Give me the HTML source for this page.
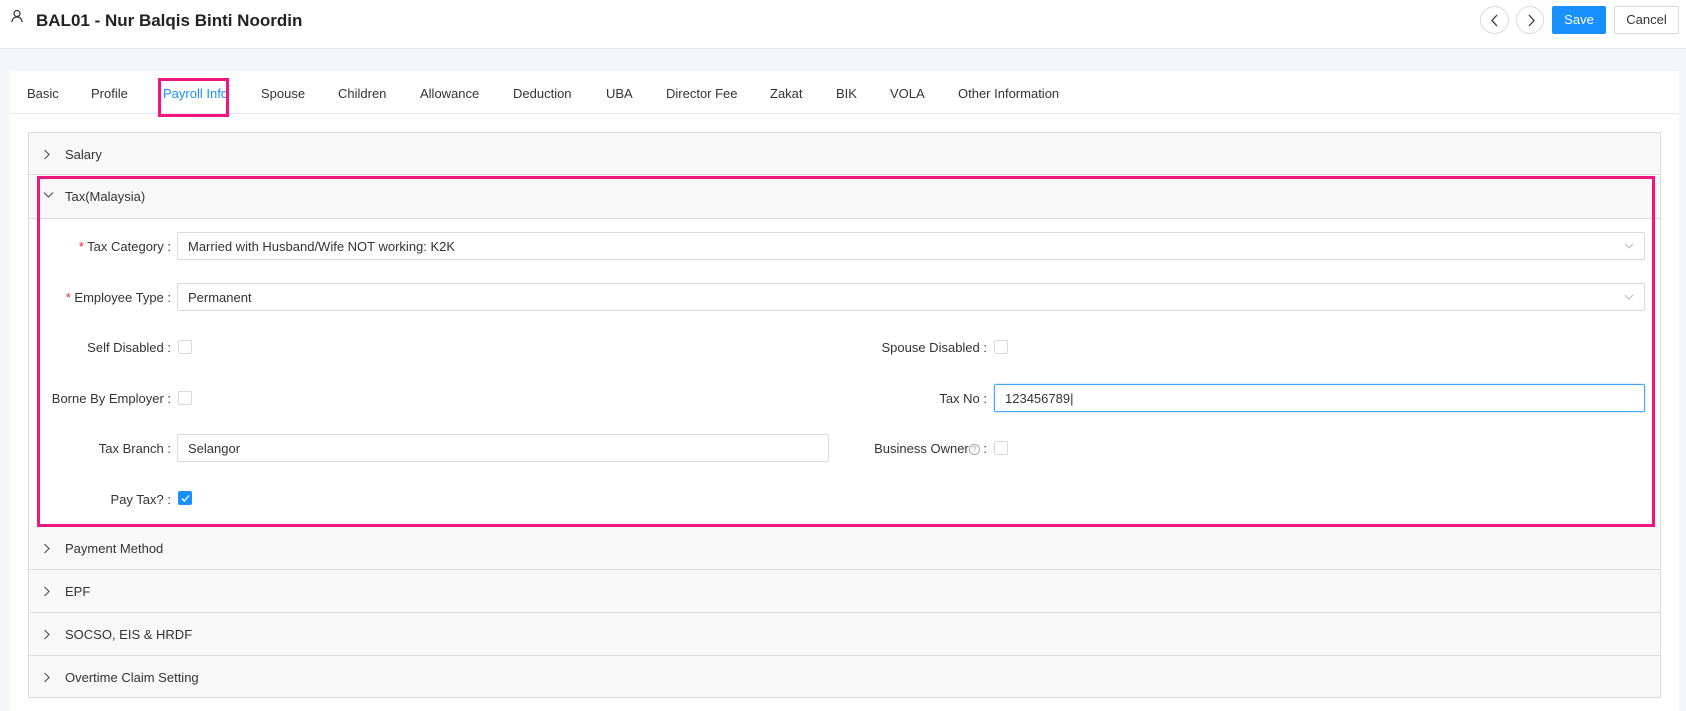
<!DOCTYPE html>
<html><head><meta charset="utf-8"><style>
*{box-sizing:border-box;margin:0;padding:0}
body{width:1686px;height:707px;overflow:hidden;background:#f4f5f8;font-family:"Liberation Sans",sans-serif;font-size:13px;color:#333;position:relative}
.a{position:absolute}
.hdr{left:0;top:0;width:1686px;height:49px;background:#fff;border-bottom:1px solid #e4e6ea}
.card{left:10px;top:71px;width:1669px;height:640px;background:#fff}
.tab{top:86px;font-size:13px;color:#333}
.ph{left:28px;width:1633px;height:43px;background:#f8f8f9;border:1px solid #dcdcdc;border-top:none}
.ph span{position:absolute;left:36px;top:14px}
.ph svg{position:absolute;left:14px;top:16px}
.lbl{text-align:right;width:200px}
.inp{border:1px solid #d9d9d9;background:#fff;border-radius:2px;height:28px;padding:6px 10px}
.cb{width:14px;height:14px;border:1px solid #d9d9d9;background:#fff;border-radius:2px}
.req{color:#f5222d}
</style></head><body>
<div class="a hdr"></div>
<svg class="a" style="left:10px;top:9px" width="14" height="14" viewBox="0 0 14 14"><circle cx="7" cy="4.5" r="3" fill="none" stroke="#333" stroke-width="1.2"/><path d="M2 13c0-3 2-5 5-5s5 2 5 5" fill="none" stroke="#333" stroke-width="1.2"/></svg>
<div class="a" style="left:36px;top:11px;font-size:17px;font-weight:bold;color:#222">BAL01 - Nur Balqis Binti Noordin</div>
<div class="a" style="left:1480px;top:6px;width:29px;height:28px;border:1px solid #d9d9d9;border-radius:50%"><svg class="a" style="left:8px;top:7px" width="12" height="13" viewBox="0 0 12 13"><path d="M8 1L3 6.5 8 12" fill="none" stroke="#333" stroke-width="1.3"/></svg></div>
<div class="a" style="left:1516px;top:6px;width:28px;height:28px;border:1px solid #d9d9d9;border-radius:50%"><svg class="a" style="left:8px;top:7px" width="12" height="13" viewBox="0 0 12 13"><path d="M4 1l5 5.5L4 12" fill="none" stroke="#333" stroke-width="1.3"/></svg></div>
<div class="a" style="left:1552px;top:6px;width:54px;height:28px;background:#1890ff;color:#fff;border-radius:2px;text-align:center;line-height:28px">Save</div>
<div class="a" style="left:1614px;top:6px;width:65px;height:28px;border:1px solid #d9d9d9;border-radius:2px;text-align:center;line-height:26px">Cancel</div>
<div class="a card"></div>
<div class="a" style="left:10px;top:113px;width:1669px;height:1px;background:#e8e8e8"></div>
<div class="a tab" style="left:27px">Basic</div>
<div class="a tab" style="left:91px">Profile</div>
<div class="a tab" style="left:163px;color:#1890ff">Payroll Info</div>
<div class="a" style="left:158px;top:78px;width:71px;height:39px;border:3px solid #f0157f"></div>
<div class="a tab" style="left:261px">Spouse</div>
<div class="a tab" style="left:338px">Children</div>
<div class="a tab" style="left:420px">Allowance</div>
<div class="a tab" style="left:513px">Deduction</div>
<div class="a tab" style="left:606px">UBA</div>
<div class="a tab" style="left:666px">Director Fee</div>
<div class="a tab" style="left:770px">Zakat</div>
<div class="a tab" style="left:836px">BIK</div>
<div class="a tab" style="left:890px">VOLA</div>
<div class="a tab" style="left:958px">Other Information</div>

<div class="a ph" style="top:132px;border-top:1px solid #dcdcdc"><svg width="8" height="11" viewBox="0 0 8 11"><path d="M1.5 1l4.5 4.5L1.5 10" fill="none" stroke="#555" stroke-width="1.2"/></svg><span>Salary</span></div>
<div class="a ph" style="top:175px;height:44px"><svg width="11" height="8" viewBox="0 0 11 8"><path d="M1 1.5l4.5 4.5L10 1.5" fill="none" stroke="#555" stroke-width="1.2"/></svg><span>Tax(Malaysia)</span></div>
<div class="a" style="left:28px;top:219px;width:1633px;height:308px;background:#fff;border-left:1px solid #dcdcdc;border-right:1px solid #dcdcdc"></div>

<div class="a lbl" style="left:-29px;top:239px"><span class="req">* </span>Tax Category :</div>
<div class="a inp" style="left:177px;top:232px;width:1468px">Married with Husband/Wife NOT working: K2K</div>
<svg class="a" style="left:1624px;top:243px" width="10" height="7" viewBox="0 0 10 7"><path d="M1 1l4 4 4-4" fill="none" stroke="#bbb" stroke-width="1"/></svg>
<div class="a lbl" style="left:-29px;top:290px"><span class="req">* </span>Employee Type :</div>
<div class="a inp" style="left:177px;top:283px;width:1468px">Permanent</div>
<svg class="a" style="left:1624px;top:294px" width="10" height="7" viewBox="0 0 10 7"><path d="M1 1l4 4 4-4" fill="none" stroke="#bbb" stroke-width="1"/></svg>

<div class="a lbl" style="left:-29px;top:340px">Self Disabled :</div>
<div class="a cb" style="left:178px;top:340px"></div>
<div class="a lbl" style="left:787px;top:340px">Spouse Disabled :</div>
<div class="a cb" style="left:994px;top:340px"></div>

<div class="a lbl" style="left:-29px;top:391px">Borne By Employer :</div>
<div class="a cb" style="left:178px;top:391px"></div>
<div class="a lbl" style="left:787px;top:391px">Tax No :</div>
<div class="a inp" style="left:994px;top:384px;width:651px;border-color:#40a9ff;box-shadow:0 0 0 1px rgba(24,144,255,.15)">123456789|</div>

<div class="a lbl" style="left:-29px;top:441px">Tax Branch :</div>
<div class="a inp" style="left:177px;top:434px;width:652px">Selangor</div>
<div class="a lbl" style="left:787px;top:441px">Business Owner<span style="display:inline-block;width:11px;height:11px;border:1px solid #aaa;border-radius:50%;font-size:8px;line-height:9px;text-align:center;color:#aaa;vertical-align:middle">?</span> :</div>
<div class="a cb" style="left:994px;top:441px"></div>

<div class="a lbl" style="left:-29px;top:492px">Pay Tax? :</div>
<div class="a cb" style="left:178px;top:491px;background:#1890ff;border-color:#1890ff"><svg class="a" style="left:2px;top:2px" width="9" height="9" viewBox="0 0 9 9"><path d="M1 4.5l2.3 2.5L8 1.5" fill="none" stroke="#fff" stroke-width="1.3"/></svg></div>

<div class="a" style="left:37px;top:176px;width:1618px;height:351px;border:3px solid #f0157f"></div>

<div class="a ph" style="top:527px"><svg width="8" height="11" viewBox="0 0 8 11"><path d="M1.5 1l4.5 4.5L1.5 10" fill="none" stroke="#555" stroke-width="1.2"/></svg><span>Payment Method</span></div>
<div class="a ph" style="top:570px"><svg width="8" height="11" viewBox="0 0 8 11"><path d="M1.5 1l4.5 4.5L1.5 10" fill="none" stroke="#555" stroke-width="1.2"/></svg><span>EPF</span></div>
<div class="a ph" style="top:613px"><svg width="8" height="11" viewBox="0 0 8 11"><path d="M1.5 1l4.5 4.5L1.5 10" fill="none" stroke="#555" stroke-width="1.2"/></svg><span>SOCSO, EIS &amp; HRDF</span></div>
<div class="a ph" style="top:656px;height:42px"><svg width="8" height="11" viewBox="0 0 8 11"><path d="M1.5 1l4.5 4.5L1.5 10" fill="none" stroke="#555" stroke-width="1.2"/></svg><span>Overtime Claim Setting</span></div>
</body></html>
